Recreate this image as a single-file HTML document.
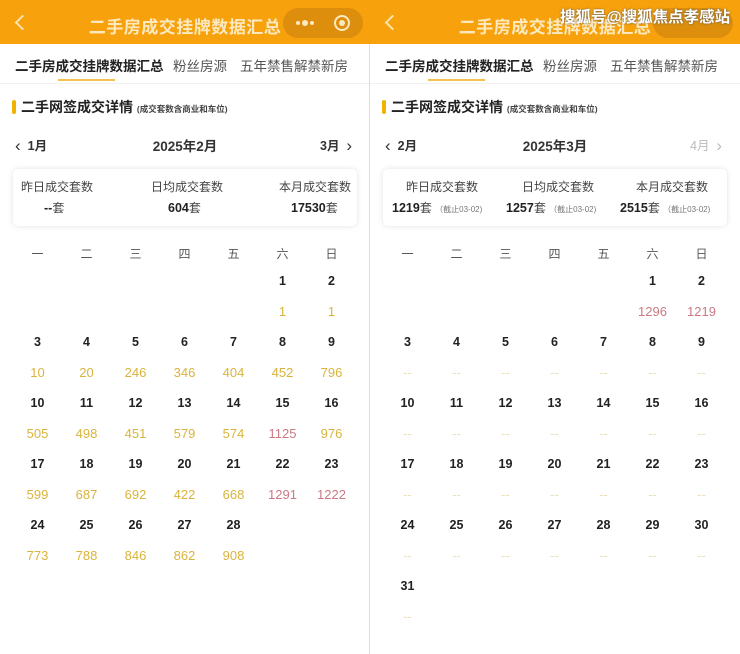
<!DOCTYPE html>
<html><head><meta charset="utf-8"><style>
*{margin:0;padding:0;box-sizing:border-box}
body{width:740px;height:654px;overflow:hidden;background:#fff;font-family:"Liberation Sans","Noto Sans CJK SC",sans-serif;position:relative;color:#333}
.p{position:absolute;top:0;width:370px;height:654px;overflow:hidden}
.hd{position:absolute;left:0;top:0;width:370px;height:44px;background:#f7a20c}
.back{position:absolute;left:17px;top:17px;width:11px;height:11px;border-left:2px solid #fde3b0;border-bottom:2px solid #fde3b0;transform:rotate(45deg)}
.ttl{position:absolute;left:0;width:370px;top:13px;text-align:center;color:#fde9c0;font-size:17px;font-weight:bold;letter-spacing:0.5px}
.cap{position:absolute;left:283px;top:8px;width:80px;height:30px;border-radius:15px;background:#dc8e0c}
.dot{position:absolute;top:13px;width:4px;height:4px;border-radius:50%;background:#fde9c0}
.tabs{position:absolute;top:44px;left:0;width:370px;height:40px;border-bottom:1px solid #f0f0f0}
.tabs span{position:absolute;top:11px;font-size:13.5px;color:#555}
.ul{position:absolute;left:58px;top:35px;width:57px;height:2px;background:#f2c24a}
.sec{position:absolute;top:97px;left:12px;font-size:14px;color:#222;font-weight:bold}
.sec i{display:inline-block;width:4px;height:14px;background:#f0b400;border-radius:2px;vertical-align:-2px;margin-right:5px}
.sec small{font-size:8.5px;color:#444}
.nav{position:absolute;top:135px;font-size:12.5px;font-weight:bold;color:#333}
.nav em{font-style:normal;font-size:17px;font-weight:normal;vertical-align:-1px}
.card{position:absolute;top:169px;left:13px;width:344px;height:57px;border-radius:5px;box-shadow:0 0 6px rgba(0,0,0,.12);background:#fff}
.card div{position:absolute;text-align:center;font-size:12px;color:#444}
.card b{font-size:12.5px;color:#222}
.note{font-size:8px;color:#777}
.grid{position:absolute;left:13px;width:343px}
.r{display:flex;height:30.5px;line-height:30.5px}
.r span{width:49px;text-align:center;font-size:12.5px}
.wk span{color:#555;font-size:12px}
.d span{font-weight:bold;color:#222}
.v span{color:#d9b43c;font-size:13px}
.v span.red{color:#c97a84}
.v span.ds{color:#ece0b8}
</style></head><body>
<div class="p" style="left:0">
<div class="hd"><div class="back"></div><div class="ttl">二手房成交挂牌数据汇总</div><div class="cap"><span class="dot" style="left:13px;width:4px;height:4px"></span><span class="dot" style="left:19px;top:12px;width:6px;height:6px"></span><span class="dot" style="left:27px"></span><span style="position:absolute;left:51px;top:7px;width:16px;height:16px;border:2px solid #fde9c0;border-radius:50%"></span><span style="position:absolute;left:56px;top:12px;width:6px;height:6px;background:#fde9c0;border-radius:50%"></span></div></div>
<div class="tabs"><span style="left:15px;color:#222;font-weight:bold">二手房成交挂牌数据汇总</span><span style="left:173px">粉丝房源</span><span style="left:240px">五年禁售解禁新房</span><div class="ul"></div></div>
<div class="sec"><i></i>二手网签成交详情 <small>(成交套数含商业和车位)</small></div>
<div class="nav" style="left:15px"><em>‹</em>&nbsp; 1月</div>
<div class="nav" style="left:0;width:370px;text-align:center;font-size:13.5px;top:135px">2025年2月</div>
<div class="nav" style="left:320px">3月 &nbsp;<em>›</em></div>
<div class="card">
<div style="left:8px;top:9px">昨日成交套数</div><div style="left:31px;top:30px"><b>--</b>套</div>
<div style="left:138px;top:9px">日均成交套数</div><div style="left:155px;top:30px"><b>604</b>套</div>
<div style="left:266px;top:9px">本月成交套数</div><div style="left:278px;top:30px"><b>17530</b>套</div>
</div>
<div class="grid" style="top:239px">
<div class="r wk"><span>一</span><span>二</span><span>三</span><span>四</span><span>五</span><span>六</span><span>日</span></div>
</div>
<div class="grid" style="top:266px">
<div class="r d"><span></span><span></span><span></span><span></span><span></span><span>1</span><span>2</span></div>
<div class="r v"><span></span><span></span><span></span><span></span><span></span><span>1</span><span>1</span></div>
<div class="r d"><span>3</span><span>4</span><span>5</span><span>6</span><span>7</span><span>8</span><span>9</span></div>
<div class="r v"><span>10</span><span>20</span><span>246</span><span>346</span><span>404</span><span>452</span><span>796</span></div>
<div class="r d"><span>10</span><span>11</span><span>12</span><span>13</span><span>14</span><span>15</span><span>16</span></div>
<div class="r v"><span>505</span><span>498</span><span>451</span><span>579</span><span>574</span><span class="red">1125</span><span>976</span></div>
<div class="r d"><span>17</span><span>18</span><span>19</span><span>20</span><span>21</span><span>22</span><span>23</span></div>
<div class="r v"><span>599</span><span>687</span><span>692</span><span>422</span><span>668</span><span class="red">1291</span><span class="red">1222</span></div>
<div class="r d"><span>24</span><span>25</span><span>26</span><span>27</span><span>28</span><span></span><span></span></div>
<div class="r v"><span>773</span><span>788</span><span>846</span><span>862</span><span>908</span><span></span><span></span></div>
</div>
</div>
<div style="position:absolute;left:369px;top:44px;width:1px;height:610px;background:#ddd"></div>
<div class="p" style="left:370px">
<div class="hd"><div class="back"></div><div class="ttl">二手房成交挂牌数据汇总</div><div class="cap"></div>
<div style="position:absolute;left:190px;top:5px;color:#fff;font-size:15.5px;font-weight:bold;text-shadow:0 0 2px #555">搜狐号@搜狐焦点孝感站</div></div>
<div class="tabs"><span style="left:15px;color:#222;font-weight:bold">二手房成交挂牌数据汇总</span><span style="left:173px">粉丝房源</span><span style="left:240px">五年禁售解禁新房</span><div class="ul"></div></div>
<div class="sec"><i></i>二手网签成交详情 <small>(成交套数含商业和车位)</small></div>
<div class="nav" style="left:15px"><em>‹</em>&nbsp; 2月</div>
<div class="nav" style="left:0;width:370px;text-align:center;font-size:13.5px;top:135px">2025年3月</div>
<div class="nav" style="left:320px;color:#bbb;font-weight:normal">4月 &nbsp;<em>›</em></div>
<div class="card">
<div style="left:23px;top:9px">昨日成交套数</div><div style="left:9px;top:30px"><b>1219</b>套 <span class="note">（截止03-02)</span></div>
<div style="left:139px;top:9px">日均成交套数</div><div style="left:123px;top:30px"><b>1257</b>套 <span class="note">（截止03-02)</span></div>
<div style="left:253px;top:9px">本月成交套数</div><div style="left:237px;top:30px"><b>2515</b>套 <span class="note">（截止03-02)</span></div>
</div>
<div class="grid" style="top:239px">
<div class="r wk"><span>一</span><span>二</span><span>三</span><span>四</span><span>五</span><span>六</span><span>日</span></div>
</div>
<div class="grid" style="top:266px">
<div class="r d"><span></span><span></span><span></span><span></span><span></span><span>1</span><span>2</span></div>
<div class="r v"><span></span><span></span><span></span><span></span><span></span><span class="red">1296</span><span class="red">1219</span></div>
<div class="r d"><span>3</span><span>4</span><span>5</span><span>6</span><span>7</span><span>8</span><span>9</span></div>
<div class="r v"><span class="ds">--</span><span class="ds">--</span><span class="ds">--</span><span class="ds">--</span><span class="ds">--</span><span class="ds">--</span><span class="ds">--</span></div>
<div class="r d"><span>10</span><span>11</span><span>12</span><span>13</span><span>14</span><span>15</span><span>16</span></div>
<div class="r v"><span class="ds">--</span><span class="ds">--</span><span class="ds">--</span><span class="ds">--</span><span class="ds">--</span><span class="ds">--</span><span class="ds">--</span></div>
<div class="r d"><span>17</span><span>18</span><span>19</span><span>20</span><span>21</span><span>22</span><span>23</span></div>
<div class="r v"><span class="ds">--</span><span class="ds">--</span><span class="ds">--</span><span class="ds">--</span><span class="ds">--</span><span class="ds">--</span><span class="ds">--</span></div>
<div class="r d"><span>24</span><span>25</span><span>26</span><span>27</span><span>28</span><span>29</span><span>30</span></div>
<div class="r v"><span class="ds">--</span><span class="ds">--</span><span class="ds">--</span><span class="ds">--</span><span class="ds">--</span><span class="ds">--</span><span class="ds">--</span></div>
<div class="r d"><span>31</span></div>
<div class="r v"><span class="ds">--</span></div>
</div>
</div>
</body></html>
